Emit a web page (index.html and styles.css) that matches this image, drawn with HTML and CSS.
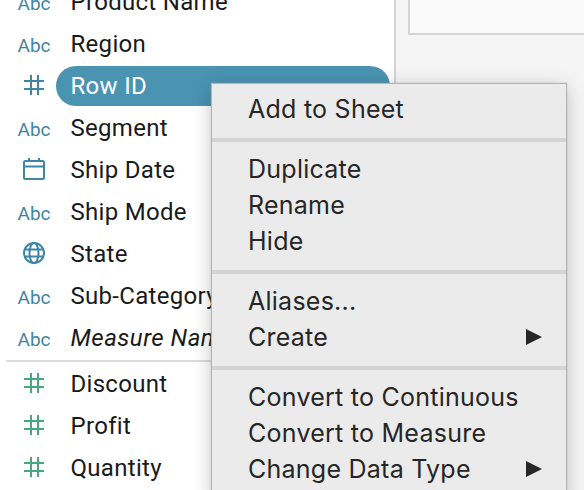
FILE: index.html
```html
<!DOCTYPE html>
<html lang="en">
<head>
  <meta charset="UTF-8" />
  <title>Data Pane Menu</title>
  <link rel="stylesheet" href="styles.css">
</head>
<body>
  <div class="page">
    <aside class="sidebar">
      <ul class="fields">
        <li class="field"><span class="type">Abc</span><span class="name">Product Name</span></li>
        <li class="field"><span class="type">Abc</span><span class="name">Region</span></li>
        <li class="field">
          <span class="type">
            <svg class="icon" width="20" height="20" viewBox="0 0 20 20"><path d="M7 0V20M14 0V20M0 6H20M0 14H20" /></svg>
          </span>
          <span class="name selected">Row ID</span>
        </li>
        <li class="field"><span class="type">Abc</span><span class="name">Segment</span></li>
        <li class="field">
          <span class="type">
            <svg class="icon" width="22" height="22" viewBox="0 0 22 22"><rect x="1" y="3" width="20" height="18" rx="1.5" /><path d="M1 8.5H21M6 0V4M16 0V4" /></svg>
          </span>
          <span class="name">Ship Date</span>
        </li>
        <li class="field"><span class="type">Abc</span><span class="name">Ship Mode</span></li>
        <li class="field">
          <span class="type">
            <svg class="icon" width="22" height="22" viewBox="0 0 22 22"><circle cx="11" cy="11" r="10" /><ellipse cx="11" cy="11" rx="4.5" ry="10" /><path d="M1.5 7.5H20.5M1.5 14.5H20.5" /></svg>
          </span>
          <span class="name">State</span>
        </li>
        <li class="field"><span class="type">Abc</span><span class="name">Sub-Category</span></li>
        <li class="field"><span class="type">Abc</span><span class="name italic">Measure Names</span></li>
      </ul>
      <hr class="divider">
      <ul class="fields measures">
        <li class="field">
          <span class="type"><svg class="icon" width="20" height="20" viewBox="0 0 20 20"><path d="M7 0V20M14 0V20M0 6H20M0 14H20" /></svg></span>
          <span class="name">Discount</span>
        </li>
        <li class="field">
          <span class="type"><svg class="icon" width="20" height="20" viewBox="0 0 20 20"><path d="M7 0V20M14 0V20M0 6H20M0 14H20" /></svg></span>
          <span class="name">Profit</span>
        </li>
        <li class="field">
          <span class="type"><svg class="icon" width="20" height="20" viewBox="0 0 20 20"><path d="M7 0V20M14 0V20M0 6H20M0 14H20" /></svg></span>
          <span class="name">Quantity</span>
        </li>
      </ul>
    </aside>

    <main class="canvas">
      <div class="sheet"></div>
    </main>

    <div class="menu">
      <div class="menu-group first">
        <div class="menu-item">Add to Sheet</div>
      </div>
      <div class="menu-group">
        <div class="menu-item">Duplicate</div>
        <div class="menu-item">Rename</div>
        <div class="menu-item">Hide</div>
      </div>
      <div class="menu-group">
        <div class="menu-item">Aliases...</div>
        <div class="menu-item">Create <span class="arrow"></span></div>
      </div>
      <div class="menu-group last">
        <div class="menu-item">Convert to Continuous</div>
        <div class="menu-item">Convert to Measure</div>
        <div class="menu-item">Change Data Type <span class="arrow"></span></div>
      </div>
    </div>
  </div>
</body>
</html>
```

FILE: styles.css
```css
html, body {
  margin: 0;
  padding: 0;
}

.page {
  position: relative;
  display: flex;
  width: 584px;
  height: 490px;
  overflow: hidden;
  background: #f5f5f5;
  font-family: Roboto, sans-serif;
  color: #1a1a1a;
}

.sidebar {
  width: 394px;
  flex-shrink: 0;
  background: #fff;
  border-right: 2px solid #d4d4d4;
}

.fields {
  list-style: none;
  margin: -20px 0 0;
  padding: 0;
}

.fields.measures {
  margin-top: 0;
}

.field {
  display: flex;
  align-items: center;
  height: 42px;
  padding-right: 4px;
}

.type {
  display: flex;
  justify-content: center;
  width: 56px;
  padding-left: 12px;
  box-sizing: border-box;
  padding-top: 4px;
  font-size: 19px;
  color: #3f86a5;
}

.type .icon {
  fill: none;
  stroke: #3f86a5;
  stroke-width: 2;
  margin-top: -4px;
}

.measures .type .icon {
  stroke: #45a87f;
}

.name {
  flex: 1;
  height: 40px;
  line-height: 40px;
  margin-top: 2px;
  padding-left: 14.5px;
  font-size: 24px;
  letter-spacing: 0.3px;
  white-space: nowrap;
}

.name.italic {
  font-style: italic;
  letter-spacing: 0.5px;
}

.name.selected {
  background: #4a94b2;
  border-radius: 20px;
  color: #fff;
}

.divider {
  height: 2px;
  margin: 2px 0 0 6px;
  border: 0;
  background: #dcdcdc;
}

.canvas {
  flex: 1;
  padding-left: 12px;
}

.sheet {
  height: 33px;
  background: #fafafa;
  border-left: 2px solid #d4d4d4;
  border-bottom: 2px solid #d4d4d4;
}

.menu {
  position: absolute;
  left: 212px;
  top: 84px;
  width: 354px;
  background: #ebebeb;
  box-shadow: 0 0 1px 1px #b4b4b4, 0 4px 18px rgba(0, 0, 0, 0.25);
  font-family: Inter, sans-serif;
  font-size: 25px;
  letter-spacing: 0.25px;
  color: #262626;
}

.menu-group {
  padding: 9px 0 11px;
  border-bottom: 4px solid #d4d4d4;
}

.menu-group.first {
  padding-top: 7px;
}

.menu-group.last {
  border-bottom: 0;
}

.menu-item {
  display: flex;
  justify-content: space-between;
  align-items: center;
  height: 36px;
  padding: 0 24px 0 36px;
}

.arrow {
  width: 0;
  height: 0;
  border-left: 16px solid #262626;
  border-top: 8.5px solid transparent;
  border-bottom: 8.5px solid transparent;
}
```
